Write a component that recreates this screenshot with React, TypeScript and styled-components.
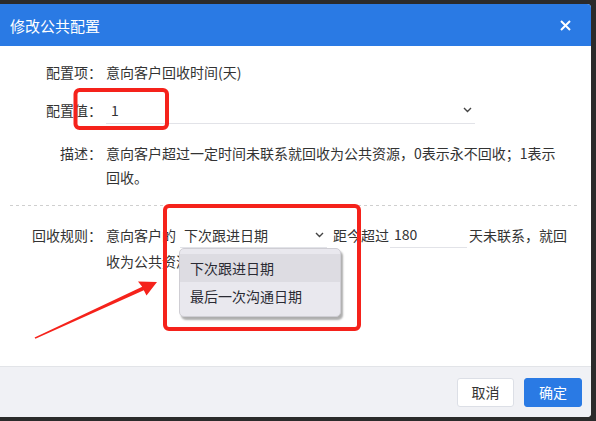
import React from 'react';
import styled, { createGlobalStyle } from 'styled-components';

const GlobalStyle = createGlobalStyle`
    body {
        margin: 0;
        background: #2b2b2b;
        font-family: 'Noto Sans CJK SC', 'Noto Sans', sans-serif;
    }
`;

const Page = styled.div`
    position: relative;
    width: 596px;
    height: 421px;
    padding: 4px 5px 4px 0;
    box-sizing: border-box;
    overflow: hidden;
`;

const Dialog = styled.div`
    width: 591px;
    height: 413px;
    background: #fff;
    border-radius: 0 4px 4px 0;
    overflow: hidden;
    display: flex;
    flex-direction: column;
`;

const Header = styled.header`
    height: 42px;
    flex-shrink: 0;
    background: #2a7ae4;
    display: flex;
    align-items: center;
    justify-content: space-between;
    padding: 0 19px 0 10px;
`;

const Title = styled.h1`
    margin: 0;
    font-size: 15px;
    font-weight: 400;
    color: #fff;
`;

const CloseButton = styled.button`
    width: 14px;
    height: 14px;
    padding: 0;
    border: none;
    background: none;
    display: flex;
    align-items: center;
    justify-content: center;
    cursor: pointer;
`;

const Body = styled.main`
    flex: 1;
    padding-top: 14px;
`;

const Row = styled.div<{ $top?: number }>`
    display: flex;
    align-items: flex-start;
    margin-top: ${(p) => p.$top ?? 0}px;
    font-size: 14px;
    color: #333;
`;

const Label = styled.label<{ $lh?: number }>`
    width: 102px;
    flex-shrink: 0;
    margin-right: 4px;
    text-align: right;
    line-height: ${(p) => p.$lh ?? 24}px;
    white-space: nowrap;
`;

const Value = styled.div<{ $lh?: number }>`
    width: 462px;
    line-height: ${(p) => p.$lh ?? 24}px;
`;

const Divider = styled.hr`
    margin: 16px 11px 0 10px;
    height: 1px;
    border: none;
    background-image: linear-gradient(to right, #cfcfcf 50%, transparent 50%);
    background-size: 6px 1px;
`;

const SelectBox = styled.div<{ $width: number; $height: number; $left?: number }>`
    position: relative;
    display: inline-flex;
    align-items: center;
    justify-content: space-between;
    vertical-align: top;
    box-sizing: border-box;
    width: ${(p) => p.$width}px;
    height: ${(p) => p.$height}px;
    margin-left: ${(p) => p.$left ?? 0}px;
    padding: 0 3px 0 5px;
    border-bottom: 1px solid #e2e3e8;
    color: #333;
`;

const InputBox = styled.span<{ $width: number; $left?: number }>`
    display: inline-block;
    vertical-align: top;
    box-sizing: border-box;
    width: ${(p) => p.$width}px;
    height: 26px;
    margin-left: ${(p) => p.$left ?? 0}px;
    padding-left: 4px;
    border-bottom: 1px solid #e2e3e8;
    line-height: 25px;
`;

const Gap = styled.span<{ $left: number }>`
    margin-left: ${(p) => p.$left}px;
`;

const Menu = styled.ul`
    position: absolute;
    top: calc(100% + 1px);
    left: -1px;
    z-index: 2;
    width: 162px;
    margin: 0;
    padding: 5px 0 6px;
    list-style: none;
    box-sizing: border-box;
    background: #e9e8ee;
    border: 1px solid #cfced4;
    border-radius: 5px;
    box-shadow: 2px 3px 2px rgba(0, 0, 0, 0.32);
`;

const MenuItem = styled.li<{ $active?: boolean }>`
    height: 28px;
    line-height: 28px;
    padding-left: 10px;
    color: #2a2a33;
    background: ${(p) => (p.$active ? '#dddce2' : 'transparent')};
`;

const Footer = styled.footer`
    height: 50px;
    flex-shrink: 0;
    border-top: 1px solid #e2e4e8;
    background: #f0f1f5;
    display: flex;
    align-items: center;
    justify-content: flex-end;
    gap: 10px;
    padding-right: 9px;
`;

const Button = styled.button<{ $primary?: boolean; $width: number }>`
    width: ${(p) => p.$width}px;
    height: 29px;
    padding: 0;
    border-radius: 3px;
    border: 1px solid ${(p) => (p.$primary ? '#2a7ae4' : '#dcdfe6')};
    background: ${(p) => (p.$primary ? '#2a7ae4' : '#fff')};
    color: ${(p) => (p.$primary ? '#fff' : '#333')};
    font-family: inherit;
    font-size: 14px;
    cursor: pointer;
`;

const Marks = styled.svg`
    position: absolute;
    left: 0;
    top: 0;
    z-index: 5;
    pointer-events: none;
`;

function Chevron() {
    return (
        <svg width="9" height="6" viewBox="0 0 9 6">
            <polyline
                points="1,1 4.5,4.5 8,1"
                fill="none"
                stroke="#444"
                strokeWidth="1.4"
            />
        </svg>
    );
}

function App() {
    return (
        <Page>
            <GlobalStyle />
            <Dialog>
                <Header>
                    <Title>修改公共配置</Title>
                    <CloseButton aria-label="close">
                        <svg width="11" height="11" viewBox="0 0 11 11">
                            <path d="M1 1L10 10M10 1L1 10" stroke="#fff" strokeWidth="2" />
                        </svg>
                    </CloseButton>
                </Header>

                <Body>
                    <Row>
                        <Label>配置项：</Label>
                        <Value>意向客户回收时间(天)</Value>
                    </Row>

                    <Row $top={12}>
                        <Label $lh={28}>配置值：</Label>
                        <SelectBox $width={369} $height={28}>
                            <span>1</span>
                            <Chevron />
                        </SelectBox>
                    </Row>

                    <Row $top={17}>
                        <Label>描述：</Label>
                        <Value>
                            意向客户超过一定时间未联系就回收为公共资源，0表示永不回收；1表示回收。
                        </Value>
                    </Row>

                    <Divider />

                    <Row $top={16}>
                        <Label $lh={26}>回收规则：</Label>
                        <Value $lh={26}>
                            意向客户的
                            <SelectBox $width={147} $height={26} $left={4}>
                                <span style={{ marginLeft: -1 }}>下次跟进日期</span>
                                <Chevron />
                                <Menu>
                                    <MenuItem $active>下次跟进日期</MenuItem>
                                    <MenuItem>最后一次沟通日期</MenuItem>
                                </Menu>
                            </SelectBox>
                            <Gap $left={6}>距今超过</Gap>
                            <InputBox $width={77} $left={1}>180</InputBox>
                            <Gap $left={2}>天未联系，就回收为公共资源</Gap>
                        </Value>
                    </Row>
                </Body>

                <Footer>
                    <Button $width={57}>取消</Button>
                    <Button $width={58} $primary>
                        确定
                    </Button>
                </Footer>
            </Dialog>

            {/* red callouts drawn over the form */}
            <Marks width="596" height="421" viewBox="0 0 596 421">
                <rect x="75.5" y="90" width="91.5" height="38" rx="4" fill="none" stroke="#f5221b" strokeWidth="4" />
                <rect x="165" y="206" width="194" height="123" rx="4" fill="none" stroke="#f5221b" strokeWidth="4" />
                <polygon
                    points="34.6,337.4 142.2,286.7 138,281.5 157,282 146.5,295.5 143.8,290.3 35.4,338.8"
                    fill="#f5221b"
                />
            </Marks>
        </Page>
    );
}

export default App;
